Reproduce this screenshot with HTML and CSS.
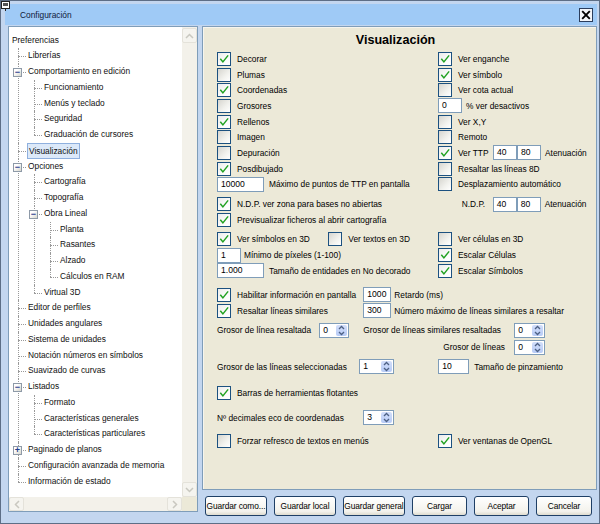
FILE: index.html
```html
<!DOCTYPE html>
<html lang="es">
<head>
<meta charset="utf-8">
<title>Configuración</title>
<link rel="stylesheet" href="styles.css">
</head>
<body>
<div class="window">
  <svg class="sysicon" width="9" height="10" viewBox="0 0 9 10"><rect x="0.5" y="0.5" width="8" height="7" fill="#fff" stroke="#222"/><rect x="2" y="2" width="5" height="3" fill="#555"/><path d="M4.5 7.5V10" stroke="#222"/></svg>
  <div class="titlebar">
    <span class="title">Configuración</span>
    <span class="close"><svg width="10" height="10" viewBox="0 0 10 10"><path d="M1.2 1.2L8.8 8.8M8.8 1.2L1.2 8.8" stroke="#000" stroke-width="1.9"/></svg></span>
  </div>
  <div class="body">
    <div class="treebox">
      <div class="treetop">
        <div class="treeview">
          <ul class="tree">
            <li><span class="node">Preferencias</span>
              <ul>
                <li><span class="node">Librerías</span></li>
                <li><span class="node"><span class="exp">−</span>Comportamiento en edición</span>
                  <ul>
                    <li><span class="node">Funcionamiento</span></li>
                    <li><span class="node">Menús y teclado</span></li>
                    <li><span class="node">Seguridad</span></li>
                    <li><span class="node">Graduación de cursores</span></li>
                  </ul>
                </li>
                <li><span class="node"><span class="sel">Visualización</span></span></li>
                <li><span class="node"><span class="exp">−</span>Opciones</span>
                  <ul>
                    <li><span class="node">Cartografía</span></li>
                    <li><span class="node">Topografía</span></li>
                    <li><span class="node"><span class="exp">−</span>Obra Lineal</span>
                      <ul>
                        <li><span class="node">Planta</span></li>
                        <li><span class="node">Rasantes</span></li>
                        <li><span class="node">Alzado</span></li>
                        <li><span class="node">Cálculos en RAM</span></li>
                      </ul>
                    </li>
                    <li><span class="node">Virtual 3D</span></li>
                  </ul>
                </li>
                <li><span class="node">Editor de perfiles</span></li>
                <li><span class="node">Unidades angulares</span></li>
                <li><span class="node">Sistema de unidades</span></li>
                <li><span class="node">Notación números en símbolos</span></li>
                <li><span class="node">Suavizado de curvas</span></li>
                <li><span class="node"><span class="exp">−</span>Listados</span>
                  <ul>
                    <li><span class="node">Formato</span></li>
                    <li><span class="node">Características generales</span></li>
                    <li><span class="node">Características particulares</span></li>
                  </ul>
                </li>
                <li><span class="node"><span class="exp plus">+</span>Paginado de planos</span></li>
                <li><span class="node">Configuración avanzada de memoria</span></li>
                <li><span class="node">Información de estado</span></li>
              </ul>
            </li>
          </ul>
        </div>
        <div class="vscroll">
          <span class="sbtn"><svg width="9" height="6" viewBox="0 0 9 6"><path d="M1 5L4.5 1.5L8 5" fill="none" stroke="#c9c8c0" stroke-width="1.5"/></svg></span>
          <span class="track"></span>
          <span class="sbtn"><svg width="9" height="6" viewBox="0 0 9 6"><path d="M1 1L4.5 4.5L8 1" fill="none" stroke="#c9c8c0" stroke-width="1.5"/></svg></span>
        </div>
      </div>
      <div class="hscroll">
        <span class="sbtn"><svg width="6" height="9" viewBox="0 0 6 9"><path d="M5 1L1.5 4.5L5 8" fill="none" stroke="#c9c8c0" stroke-width="1.5"/></svg></span>
        <span class="track"></span>
        <span class="sbtn"><svg width="6" height="9" viewBox="0 0 6 9"><path d="M1 1L4.5 4.5L1 8" fill="none" stroke="#c9c8c0" stroke-width="1.5"/></svg></span>
        <span class="corner"></span>
      </div>
    </div>

    <div class="main">
      <div class="panel">
        <div class="ptitle">Visualización</div>

        <div class="row"><div class="lc"><span class="chk on"><svg viewBox="0 0 13 13"><path d="M2.5 6.2L5.3 9.6L11 2.6"/></svg></span>Decorar</div><div class="rc"><span class="chk on"><svg viewBox="0 0 13 13"><path d="M2.5 6.2L5.3 9.6L11 2.6"/></svg></span>Ver enganche</div></div>
        <div class="row"><div class="lc"><span class="chk"></span>Plumas</div><div class="rc"><span class="chk on"><svg viewBox="0 0 13 13"><path d="M2.5 6.2L5.3 9.6L11 2.6"/></svg></span>Ver símbolo</div></div>
        <div class="row"><div class="lc"><span class="chk on"><svg viewBox="0 0 13 13"><path d="M2.5 6.2L5.3 9.6L11 2.6"/></svg></span>Coordenadas</div><div class="rc"><span class="chk"></span>Ver cota actual</div></div>
        <div class="row"><div class="lc"><span class="chk"></span>Grosores</div><div class="rc"><span class="inp w24">0</span><span class="gap4"></span>% ver desactivos</div></div>
        <div class="row"><div class="lc"><span class="chk on"><svg viewBox="0 0 13 13"><path d="M2.5 6.2L5.3 9.6L11 2.6"/></svg></span>Rellenos</div><div class="rc"><span class="chk"></span>Ver X,Y</div></div>
        <div class="row"><div class="lc"><span class="chk"></span>Imagen</div><div class="rc"><span class="chk"></span>Remoto</div></div>
        <div class="row"><div class="lc"><span class="chk"></span>Depuración</div><div class="rc"><span class="chk on"><svg viewBox="0 0 13 13"><path d="M2.5 6.2L5.3 9.6L11 2.6"/></svg></span><span class="ttp">Ver TTP</span><span class="inp w24">40</span><span class="inp w24">80</span><span class="gap4"></span>Atenuación</div></div>
        <div class="row"><div class="lc"><span class="chk on"><svg viewBox="0 0 13 13"><path d="M2.5 6.2L5.3 9.6L11 2.6"/></svg></span>Posdibujado</div><div class="rc"><span class="chk"></span>Resaltar las líneas 8D</div></div>
        <div class="row"><div class="lc"><span class="inp w47">10000</span><span class="gap5"></span>Máximo de puntos de TTP en pantalla</div><div class="rc"><span class="chk"></span>Desplazamiento automático</div></div>

        <div class="row mt4"><div class="lc"><span class="chk on"><svg viewBox="0 0 13 13"><path d="M2.5 6.2L5.3 9.6L11 2.6"/></svg></span>N.D.P. ver zona para bases no abiertas</div><div class="rc"><span class="ndp">N.D.P.</span><span class="inp w24">40</span><span class="inp w24">80</span><span class="gap4"></span>Atenuación</div></div>
        <div class="row"><div class="lc"><span class="chk on"><svg viewBox="0 0 13 13"><path d="M2.5 6.2L5.3 9.6L11 2.6"/></svg></span>Previsualizar ficheros al abrir cartografía</div></div>

        <div class="row mt4"><div class="lc"><span class="sub w111"><span class="chk on"><svg viewBox="0 0 13 13"><path d="M2.5 6.2L5.3 9.6L11 2.6"/></svg></span>Ver símbolos en 3D</span><span class="chk"></span>Ver textos en 3D</div><div class="rc"><span class="chk"></span>Ver células en 3D</div></div>
        <div class="row"><div class="lc"><span class="inp w24">1</span><span class="gap3"></span>Mínimo de píxeles (1-100)</div><div class="rc"><span class="chk on"><svg viewBox="0 0 13 13"><path d="M2.5 6.2L5.3 9.6L11 2.6"/></svg></span>Escalar Células</div></div>
        <div class="row"><div class="lc"><span class="inp w47">1.000</span><span class="gap5"></span>Tamaño de entidades en No decorado</div><div class="rc"><span class="chk on"><svg viewBox="0 0 13 13"><path d="M2.5 6.2L5.3 9.6L11 2.6"/></svg></span>Escalar Símbolos</div></div>

        <div class="row mt8"><span class="sub w146"><span class="chk on"><svg viewBox="0 0 13 13"><path d="M2.5 6.2L5.3 9.6L11 2.6"/></svg></span>Habilitar información en pantalla</span><span class="inp w28">1000</span><span class="gap3"></span>Retardo (ms)</div>
        <div class="row"><span class="sub w146"><span class="chk on"><svg viewBox="0 0 13 13"><path d="M2.5 6.2L5.3 9.6L11 2.6"/></svg></span>Resaltar líneas similares</span><span class="inp w28">300</span><span class="gap3"></span>Número máximo de líneas similares a resaltar</div>

        <div class="row mt4"><span class="sub w102">Grosor de línea resaltada</span><span class="spin w30"><span class="v">0</span><span class="arr"><svg width="7" height="11" viewBox="0 0 7 11"><path d="M1 4L3.5 1.5L6 4M1 7L3.5 9.5L6 7" fill="none" stroke="#4d6185" stroke-width="1.3"/></svg></span></span><span class="gap14"></span><span class="sub w151">Grosor de líneas similares resaltadas</span><span class="spin w31"><span class="v">0</span><span class="arr"><svg width="7" height="11" viewBox="0 0 7 11"><path d="M1 4L3.5 1.5L6 4M1 7L3.5 9.5L6 7" fill="none" stroke="#4d6185" stroke-width="1.3"/></svg></span></span></div>
        <div class="row mt1"><span class="sub ml226 w71">Grosor de líneas</span><span class="spin w31"><span class="v">0</span><span class="arr"><svg width="7" height="11" viewBox="0 0 7 11"><path d="M1 4L3.5 1.5L6 4M1 7L3.5 9.5L6 7" fill="none" stroke="#4d6185" stroke-width="1.3"/></svg></span></span></div>
        <div class="row mt4"><span class="sub w142">Grosor de las líneas seleccionadas</span><span class="spin w35"><span class="v">1</span><span class="arr"><svg width="7" height="11" viewBox="0 0 7 11"><path d="M1 4L3.5 1.5L6 4M1 7L3.5 9.5L6 7" fill="none" stroke="#4d6185" stroke-width="1.3"/></svg></span></span><span class="gap44"></span><span class="inp w31">10</span><span class="gap5"></span>Tamaño de pinzamiento</div>

        <div class="row mt11"><div class="lc"><span class="chk on"><svg viewBox="0 0 13 13"><path d="M2.5 6.2L5.3 9.6L11 2.6"/></svg></span>Barras de herramientas flotantes</div></div>
        <div class="row mt9"><span class="sub w146">Nº decimales eco de coordenadas</span><span class="spin w31"><span class="v">3</span><span class="arr"><svg width="7" height="11" viewBox="0 0 7 11"><path d="M1 4L3.5 1.5L6 4M1 7L3.5 9.5L6 7" fill="none" stroke="#4d6185" stroke-width="1.3"/></svg></span></span></div>
        <div class="row mt7"><div class="lc"><span class="chk"></span>Forzar refresco de textos en menús</div><div class="rc"><span class="chk on"><svg viewBox="0 0 13 13"><path d="M2.5 6.2L5.3 9.6L11 2.6"/></svg></span>Ver ventanas de OpenGL</div></div>
      </div>

      <div class="buttons">
        <button class="btn b62">Guardar como...</button>
        <button class="btn b62">Guardar local</button>
        <button class="btn b62">Guardar general</button>
        <button class="btn b55">Cargar</button>
        <button class="btn b55">Aceptar</button>
        <button class="btn b56">Cancelar</button>
      </div>
    </div>
  </div>
</div>
</body>
</html>
```

FILE: styles.css
```css
* { box-sizing: border-box; }
html, body { margin: 0; padding: 0; }
body {
  width: 600px;
  height: 524px;
  overflow: hidden;
  font-family: "Liberation Sans", Arial, sans-serif;
  font-size: 8.35px;
  color: #000;
  background: #fff;
}

.window {
  position: relative;
  width: 600px;
  height: 524px;
  border: 1px solid #5d6e86;
  background: #c3d6ef;
  padding: 3px 2px 0 4px;
}
.sysicon { position: absolute; left: 0; top: 0; }

.titlebar {
  height: 21px;
  background: #9fcaf6;
  display: flex;
  align-items: center;
  padding-left: 15px;
  padding-right: 4px;
}
.title { flex: 1; color: #10203a; font-size: 8.4px; }
.close {
  width: 14px; height: 14px;
  border: 1px solid #2b3d5c;
  background: #f4f6fa;
  display: flex; align-items: center; justify-content: center;
}

.body {
  display: flex;
  margin-top: 1px;
  padding-left: 3px;
  gap: 4px;
}

/* tree */
.treebox {
  width: 190px;
  height: 486px;
  border: 1px solid #7f9db9;
  background: #fff;
  display: flex;
  flex-direction: column;
}
.treetop { flex: 1; display: flex; min-height: 0; }
.treeview { flex: 1; overflow: hidden; }
.vscroll {
  width: 15px;
  display: flex; flex-direction: column;
  background: #f3f1ea;
  padding-top: 1px;
}
.sbtn {
  width: 15px; height: 15px;
  flex: none;
  background: #f5f4ef;
  border: 1px solid #e4e2da;
  border-radius: 2px;
  display: flex; align-items: center; justify-content: center;
}
.track { flex: 1; }
.hscroll {
  height: 14px;
  display: flex;
  background: #f3f1ea;
}
.hscroll .sbtn { height: 14px; }
.corner { width: 15px; background: #ece9d8; }

.tree, .tree ul { list-style: none; margin: 0; }
.tree { padding: 5.5px 0 0 3px; }
.tree ul { padding-left: 16px; }
.tree li { position: relative; }
.tree ul > li::before {
  content: "";
  position: absolute;
  left: -10px; top: 0; bottom: 0;
  border-left: 1px dotted #999;
}
.tree ul > li:last-child::before { bottom: auto; height: 8px; }
.tree ul > li::after {
  content: "";
  position: absolute;
  left: -10px; top: 8px;
  width: 8px;
  border-top: 1px dotted #999;
}
.node {
  display: block;
  position: relative;
  height: 15.75px;
  line-height: 15.75px;
  white-space: nowrap;
  color: #111;
}
.exp {
  position: absolute;
  z-index: 1;
  left: -15px; top: 4px;
  width: 9px; height: 9px;
  border: 1px solid #8e9aa8;
  background: linear-gradient(135deg, #fff 30%, #d8d6cc);
  color: #1f3c8c;
  font-size: 9px;
  line-height: 6px;
  text-align: center;
  font-weight: bold;
}
.exp.plus { line-height: 7px; }
.sel {
  display: inline-block;
  height: 16px;
  line-height: 14px;
  margin-left: -1px;
  padding: 0 1px;
  background: #dce9f9;
  border: 1px solid #8fb0de;
}

/* main */
.main { width: 395px; display: flex; flex-direction: column; }
.panel {
  height: 464px;
  background: #ece9d8;
  border: 1px solid #7f9db9;
  box-shadow: inset 1px 1px 0 #f6f5ee;
  padding: 4px 0 0 14px;
}
.ptitle {
  font-weight: bold;
  font-size: 12.6px;
  height: 19px;
  line-height: 18px;
  text-align: center;
  padding-right: 22px;
  margin-bottom: 1px;
}
.row {
  display: flex;
  align-items: center;
  height: 15.7px;
  white-space: nowrap;
}
.lc { width: 221px; display: flex; align-items: center; }
.rc { display: flex; align-items: center; }
.sub { display: flex; align-items: center; flex: none; }
.w111 { width: 111.3px; }
.w146 { width: 146.3px; }
.w102 { width: 102.3px; }
.w151 { width: 151px; }
.w142 { width: 142.3px; }
.w71 { width: 71px; }
.ml226 { margin-left: 226.3px; }
.mt1 { margin-top: 1px; }
.mt4 { margin-top: 4px; }
.mt7 { margin-top: 7.5px; }
.mt8 { margin-top: 8.5px; }
.mt9 { margin-top: 9.3px; }
.mt11 { margin-top: 10.6px; }
.gap3 { width: 3px; flex: none; }
.gap4 { width: 4px; flex: none; }
.gap5 { width: 5px; flex: none; }
.gap14 { width: 14px; flex: none; }
.gap44 { width: 44px; flex: none; }

.chk {
  flex: none;
  width: 14px; height: 14px;
  border: 1px solid #1c5180;
  background: linear-gradient(135deg, #d6d5cf 0%, #f2f2ee 60%, #fff 100%);
  margin-right: 6px;
  display: flex;
}
.chk.on { background: linear-gradient(135deg, #ececea 0%, #fbfbfb 60%, #fff 100%); }
.chk svg { width: 12px; height: 12px; }
.chk svg path { fill: none; stroke: #21a121; stroke-width: 1.6; }

.ttp { width: 35px; flex: none; }
.ndp { width: 31px; margin-left: 23.7px; flex: none; }

.inp {
  flex: none;
  height: 15px;
  border: 1px solid #7f9db9;
  background: #fff;
  padding-left: 3px;
  line-height: 13px;
  font-size: 8.6px;
}
.w24 { width: 24px; }
.w28 { width: 28px; }
.w31 { width: 31px; }
.w47 { width: 47px; }
.spin {
  flex: none;
  height: 15px;
  border: 1px solid #7f9db9;
  background: #fff;
  display: flex;
  padding: 1px;
}
.w30 { width: 30px; }
.w35 { width: 35px; }
.spin .v { flex: 1; padding-left: 2px; line-height: 11px; font-size: 8.6px; }
.spin .arr {
  width: 11px;
  background: linear-gradient(#d2defa, #b7cbf6);
  border-radius: 2px;
  display: flex; align-items: center; justify-content: center;
}

.buttons {
  display: flex;
  gap: 7px;
  margin-top: 6px;
  padding-left: 3px;
}
.btn {
  height: 20px;
  padding: 0;
  border: 1px solid #1e3f66;
  border-radius: 3px;
  background: linear-gradient(#ffffff, #f3f2ec 80%, #dedbcf);
  font-family: "Liberation Sans", Arial, sans-serif;
  font-size: 8.35px;
  color: #000;
  white-space: nowrap;
  overflow: hidden;
  letter-spacing: -0.1px;
}
.b62 { width: 62px; }
.b55 { width: 55px; }
.b56 { width: 56px; }
```
